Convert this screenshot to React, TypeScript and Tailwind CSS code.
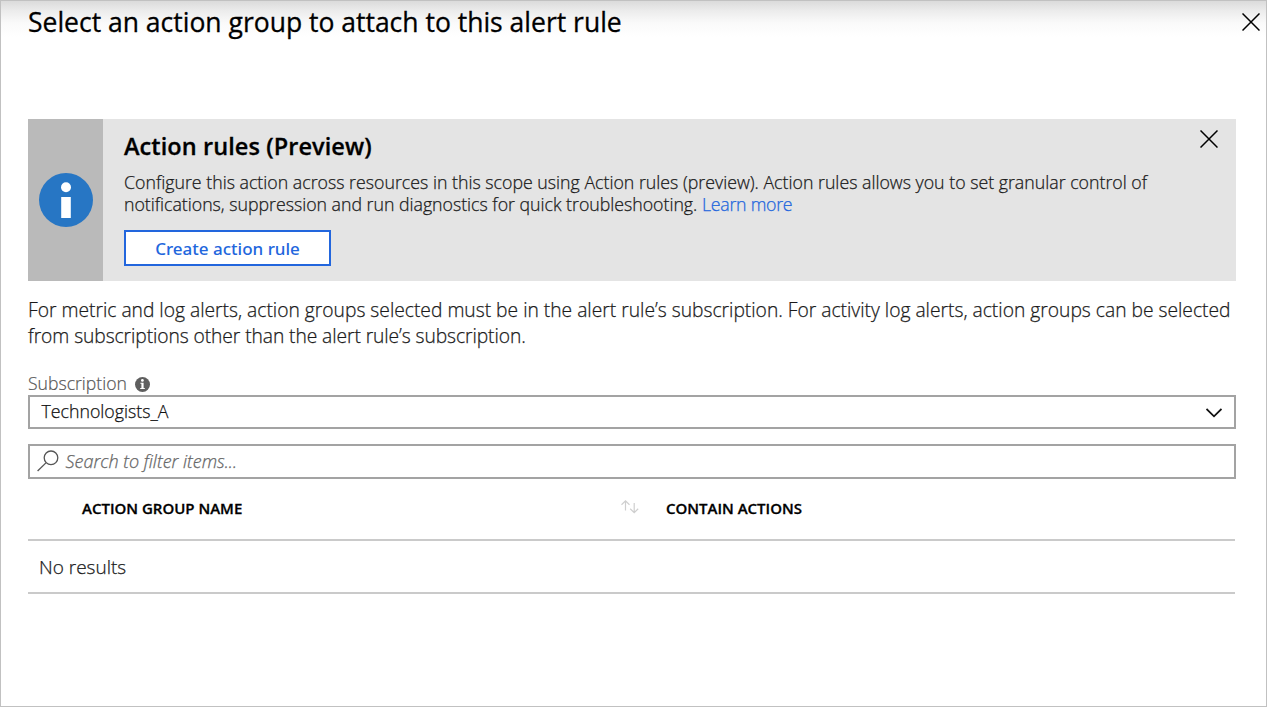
import { ReactNode } from "react";

function CloseIcon() {
  return (
    <svg width="18" height="18" viewBox="0 0 18 18" fill="none" stroke="#000" strokeWidth="1.5">
      <path d="M0.5 0.5L17.5 17.5M17.5 0.5L0.5 17.5" />
    </svg>
  );
}

function InfoIcon() {
  return (
    <svg width="54" height="54" viewBox="0 0 54 54">
      <circle cx="27" cy="27" r="27" fill="#2776c4" />
      <circle cx="27" cy="14.2" r="5" fill="#fff" />
      <rect x="22.2" y="24" width="9.6" height="21" fill="#fff" />
    </svg>
  );
}

function SmallInfoIcon() {
  return (
    <svg width="15" height="15" viewBox="0 0 15 15">
      <circle cx="7.5" cy="7.5" r="7.5" fill="#5f5f5f" />
      <circle cx="7.4" cy="3.4" r="1.4" fill="#fff" />
      <path d="M5.4 5.8H8.6V11H9.8V12H5.2V11H6.4V6.8H5.4Z" fill="#fff" />
    </svg>
  );
}

function SearchIcon() {
  return (
    <svg width="22" height="22" viewBox="0 0 22 22" fill="none" stroke="#555" strokeWidth="1.3">
      <circle cx="14" cy="7.8" r="6.8" />
      <path d="M9.2 12.6L0.6 21" />
    </svg>
  );
}

function SortIcon() {
  return (
    <svg width="18" height="14" viewBox="0 0 18 14" fill="none" stroke="#cfcfcf" strokeWidth="1.2">
      <path d="M4.5 10.5V1M0.5 4.8L4.5 0.9L8.5 4.8" />
      <path d="M13.2 3V12.6M9.2 8.8L13.2 12.7L17.2 8.8" />
    </svg>
  );
}

function Field({ children }: { children: ReactNode }) {
  return <div className="flex items-center border-2 border-[#a3a3a3] bg-white">{children}</div>;
}

export default function App() {
  return (
    <div className="flex h-[707px] w-[1267px] flex-col border border-[#c1c1c1] bg-[linear-gradient(to_bottom,#dbdbdb_0px,#ececec_10px,#fafafa_22px,#ffffff_36px)] pl-[27px] font-['Open_Sans',sans-serif] text-black">
      <header className="flex h-[118px] items-start justify-between pr-[6px]">
        <h1 className="h-11 text-[26.5px] leading-[43px] whitespace-nowrap [-webkit-text-stroke:0.3px]">
          Select an action group to attach to this alert rule
        </h1>
        <button className="mt-3">
          <CloseIcon />
        </button>
      </header>

      <main className="flex w-[1208px] flex-col">
        <section className="flex h-[162px] bg-[#e4e4e4]">
          <div className="flex w-[75px] items-center justify-center bg-[#bababa]">
            <InfoIcon />
          </div>
          <div className="flex-1 pt-2.5 pl-[21px]">
            <h2 className="h-[42px] text-[23.5px] leading-[34px] font-semibold tracking-[0.08px] [-webkit-text-stroke:0.3px]">
              Action rules (Preview)
            </h2>
            <p className="h-[59px] text-[17.75px] leading-[22px] font-light whitespace-nowrap text-[#1a1a1a] [-webkit-text-stroke:0.25px]">
              Configure this action across resources in this scope using Action rules (preview). Action rules allows you to set granular control of
              <br />
              <span className="tracking-[-0.02px]">
                notifications, suppression and run diagnostics for quick troubleshooting.{" "}
              </span>
              <a className="tracking-[-0.25px] text-[#2266dd]">Learn more</a>
            </p>
            <button className="h-9 w-[207px] border-2 border-[#2266dd] bg-white pt-px font-['Noto_Sans',sans-serif] text-[17px] leading-8 font-medium text-[#2266dd]">
              Create action rule
            </button>
          </div>
          <button className="mt-[11px] mr-[18px] h-[18px]">
            <CloseIcon />
          </button>
        </section>

        <p className="mt-4 h-[75px] text-[19.24px] leading-[26px] font-light whitespace-nowrap text-[#1a1a1a] [-webkit-text-stroke:0.25px]">
          For metric and log alerts, action groups selected must be in the alert rule’s subscription. For activity log alerts, action groups can be selected
          <br />
          <span className="tracking-[-0.08px]">from subscriptions other than the alert rule’s subscription.</span>
        </p>

        <div className="flex h-[23px] items-center gap-2">
          <label className="-mt-px text-[17.6px] leading-6 font-light text-[#555] [-webkit-text-stroke:0.2px]">Subscription</label>
          <span className="pt-px">
            <SmallInfoIcon />
          </span>
        </div>
        <Field>
          <span className="h-[30px] flex-1 pl-[11.5px] text-[17.75px] leading-[28px] font-light text-[#111] [-webkit-text-stroke:0.25px]">
            Technologists_A
          </span>
          <svg className="mt-px mr-3" width="16" height="10" viewBox="0 0 16 10" fill="none" stroke="#111" strokeWidth="1.8">
            <path d="M0.5 1L8 8.3L15.5 1" />
          </svg>
        </Field>

        <div className="mt-[15px]">
          <Field>
            <div className="flex h-[31px] items-center gap-[6.5px] pb-[2px] pl-[7px]">
              <SearchIcon />
              <span className="text-[18px] leading-[28px] font-light text-[#666] italic [-webkit-text-stroke:0.25px]">
                Search to filter items...
              </span>
            </div>
          </Field>
        </div>

        <div className="w-[1207px]">
          <div className="flex h-[62px] border-b-2 border-[#cacaca] text-[15px] leading-[58px] font-semibold [-webkit-text-stroke:0.3px]">
            <div className="flex h-[60px] w-[638px] justify-between pr-[27px] pl-[54px]">
              <span>ACTION GROUP NAME</span>
              <span className="pt-[21px] leading-none">
                <SortIcon />
              </span>
            </div>
            <span>CONTAIN ACTIONS</span>
          </div>
          <div className="h-[53px] border-b-2 border-[#cacaca] pl-[11px] text-[19px] leading-[53px] font-light text-[#1a1a1a] [-webkit-text-stroke:0.25px]">
            No results
          </div>
        </div>
      </main>
    </div>
  );
}
